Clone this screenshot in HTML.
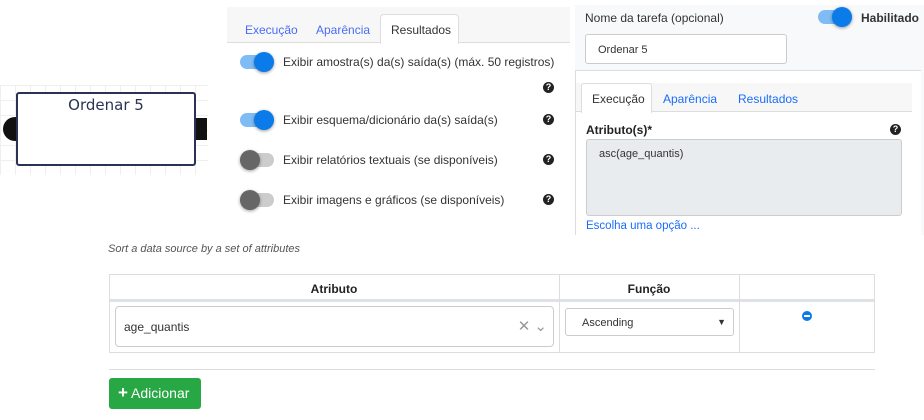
<!DOCTYPE html><html><head><meta charset="utf-8"><style>
*{box-sizing:border-box}body{margin:0;width:924px;height:420px;background:#fff;font-family:"Liberation Sans",sans-serif;position:relative;overflow:hidden;color:#333}
.a{position:absolute}
.tg{position:absolute;width:34px;height:14px;border-radius:7px}
.tg i{position:absolute;top:-3px;width:20px;height:20px;border-radius:50%;box-shadow:0 1px 3px rgba(0,0,0,.4)}
.on{background:#7fbcf5}.on i{right:0;background:#0a7be8}
.off{background:#ccc}.off i{left:0;background:#666}
.q{position:absolute;width:11px;height:11px;border-radius:50%;background:#222;color:#fff;font-size:9px;font-weight:bold;text-align:center;line-height:11px}
.t{position:absolute;font-size:12px;color:#333}
</style></head><body>
<div class="a" style="left:0;top:85px;width:208px;height:90px;background-image:linear-gradient(#efefef 1px,transparent 1px),linear-gradient(90deg,#efefef 1px,transparent 1px);background-size:15px 15px"></div>
<div class="a" style="left:3px;top:117px;width:24px;height:24px;border-radius:50%;background:#111"></div>
<div class="a" style="left:190px;top:118px;width:17px;height:22px;background:#111"></div>
<div class="a" style="left:16px;top:92px;width:180px;height:74px;background:#fff;border:2px solid #2a3356;border-radius:3px;text-align:center;font-size:15px;color:#2a3356;padding-top:2px;font-family:'DejaVu Sans',sans-serif">Ordenar 5</div>
<div class="a" style="left:227px;top:7px;width:343px;height:36px;background:#f7f7f7;border-bottom:1px solid #ddd"></div>
<div class="a" style="left:380px;top:14px;width:79px;height:30px;background:#fff;border:1px solid #ddd;border-bottom:none;border-radius:4px 4px 0 0"></div>
<div class="t" style="left:245px;top:23px;color:#4a6cf7">Execução</div>
<div class="t" style="left:316px;top:23px;color:#4a6cf7">Aparência</div>
<div class="t" style="left:391px;top:23px">Resultados</div>
<div class="tg on" style="left:240px;top:55px"><i></i></div>
<div class="t" style="left:283px;top:55px">Exibir amostra(s) da(s) saída(s) (máx. 50 registros)</div>
<div class="q" style="left:543px;top:82px">?</div>
<div class="tg on" style="left:240px;top:113px"><i></i></div>
<div class="t" style="left:283px;top:113px">Exibir esquema/dicionário da(s) saída(s)</div>
<div class="q" style="left:543px;top:114px">?</div>
<div class="tg off" style="left:240px;top:153px"><i></i></div>
<div class="t" style="left:283px;top:153px">Exibir relatórios textuais (se disponíveis)</div>
<div class="q" style="left:543px;top:154px">?</div>
<div class="tg off" style="left:240px;top:193px"><i></i></div>
<div class="t" style="left:283px;top:193px">Exibir imagens e gráficos (se disponíveis)</div>
<div class="q" style="left:543px;top:194px">?</div>
<div class="a" style="left:575px;top:5px;width:349px;height:230px;background:#f8f9fa"></div>
<div class="t" style="left:585px;top:11px">Nome da tarefa (opcional)</div>
<div class="tg on" style="left:818px;top:10px"><i></i></div>
<div class="t" style="left:861px;top:11px;font-weight:bold">Habilitado</div>
<div class="a" style="left:585px;top:34px;width:202px;height:30px;background:#fff;border:1px solid #ccc;border-radius:3px;font-size:11px;padding:9px 12px">Ordenar 5</div>
<div class="a" style="left:575px;top:70px;width:346px;height:165px;border:1px solid #ddd;border-right:none;border-bottom:none;background:#fff"></div>
<div class="a" style="left:576px;top:83px;width:336px;height:29px;background:#f7f7f7;border-bottom:1px solid #ddd"></div>
<div class="a" style="left:581px;top:83px;width:71px;height:30px;background:#fff;border:1px solid #ddd;border-bottom:none;border-radius:3px 3px 0 0"></div>
<div class="t" style="left:592px;top:92px">Execução</div>
<div class="t" style="left:663px;top:92px;color:#1a6dfa">Aparência</div>
<div class="t" style="left:738px;top:92px;color:#1a6dfa">Resultados</div>
<div class="t" style="left:586px;top:123px;font-weight:bold;color:#222">Atributo(s)*</div>
<div class="q" style="left:890px;top:124px">?</div>
<div class="a" style="left:586px;top:139px;width:316px;height:77px;background:#e9ecef;border:1px solid #ccc;border-radius:3px;font-size:11px;padding:8px 12px">asc(age_quantis)</div>
<div class="t" style="left:586px;top:220px;color:#1a6dfa;font-size:11.5px">Escolha uma opção ...</div>
<div class="a" style="left:108px;top:243px;font-size:11px;font-style:italic;color:#555">Sort a data source by a set of attributes</div>
<div class="a" style="left:109px;top:274px;width:766px;height:79px;border:1px solid #ddd"></div>
<div class="a" style="left:110px;top:299px;width:764px;height:3px;background:#dee2e6"></div>
<div class="a" style="left:559px;top:274px;width:1px;height:79px;background:#ddd"></div>
<div class="a" style="left:739px;top:274px;width:1px;height:79px;background:#ddd"></div>
<div class="t" style="left:109px;top:282px;width:450px;text-align:center;font-weight:bold;color:#222">Atributo</div>
<div class="t" style="left:559px;top:282px;width:180px;text-align:center;font-weight:bold;color:#222">Função</div>
<div class="a" style="left:115px;top:306px;width:439px;height:41px;border:1px solid #ccc;border-radius:4px;font-size:12px;padding:13px 8px">age_quantis<span style="position:absolute;right:6px;top:10px;color:#999;font-size:15px">✕ ⌄</span></div>
<div class="a" style="left:565px;top:308px;width:169px;height:28px;border:1px solid #ccc;border-radius:3px;font-size:11px;padding:8px 16px">Ascending<span style="position:absolute;right:7px;top:8px;font-size:9px">▼</span></div>
<div class="a" style="left:802px;top:311px;width:10px;height:10px;border-radius:50%;background:#0a7be8"><div class="a" style="left:2px;top:4px;width:6px;height:2px;background:#fff"></div></div>
<div class="a" style="left:109px;top:369px;width:766px;height:1px;background:#ddd"></div>
<div class="a" style="left:109px;top:378px;width:92px;height:31px;background:#28a745;border-radius:3px;color:#fff;font-size:14px;padding:7px 0 0 9px"><b style="font-size:17px;line-height:14px">+</b> Adicionar</div>
</body></html>
